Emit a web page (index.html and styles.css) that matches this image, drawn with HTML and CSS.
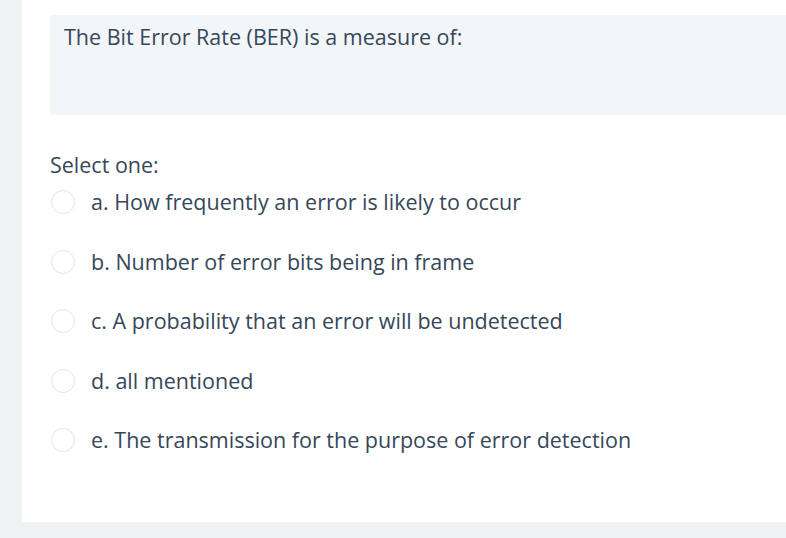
FILE: index.html
```html
<!DOCTYPE html>
<html>
<head>
<meta charset="utf-8">
<link rel="stylesheet" href="styles.css">
</head>
<body>
<div class="card">
  <div class="qtext">The Bit Error Rate (BER) is a measure of:</div>
  <div class="prompt">Select one:</div>
  <div class="answers">
    <label class="opt"><span class="radio"></span><span>a. How frequently an error is likely to occur</span></label>
    <label class="opt"><span class="radio"></span><span>b. Number of error bits being in frame</span></label>
    <label class="opt"><span class="radio"></span><span>c. A probability that an error will be undetected</span></label>
    <label class="opt"><span class="radio"></span><span>d. all mentioned</span></label>
    <label class="opt"><span class="radio"></span><span>e. The transmission for the purpose of error detection</span></label>
  </div>
</div>
</body>
</html>
```
FILE: styles.css
```css
html, body {
  margin: 0;
  padding: 0;
}
body {
  background: #eff3f4;
  font-family: "Open Sans", "Liberation Sans", sans-serif;
  color: #36475a;
  font-size: 21.5px;
  width: 786px;
  height: 538px;
  overflow: hidden;
}
.card {
  margin-left: 22px;
  background: #ffffff;
  height: 522px;
  padding: 15px 0 0 28px;
  box-sizing: border-box;
}
.qtext {
  background: #f2f6f9;
  border-radius: 3px 0 0 3px;
  height: 100px;
  box-sizing: border-box;
  padding: 7px 14px;
  line-height: 30px;
}
.prompt {
  margin-top: 35px;
  line-height: 30px;
}
.answers {
  display: flex;
  flex-direction: column;
  gap: 29.5px;
  margin-top: 7px;
}
.opt {
  display: flex;
  align-items: center;
  height: 30px;
  gap: 16px;
  line-height: 30px;
}
.radio {
  width: 22px;
  height: 22px;
  border: 1.5px solid #dfe5e8;
  border-radius: 50%;
  margin-left: 1px;
  flex: none;
}
```
